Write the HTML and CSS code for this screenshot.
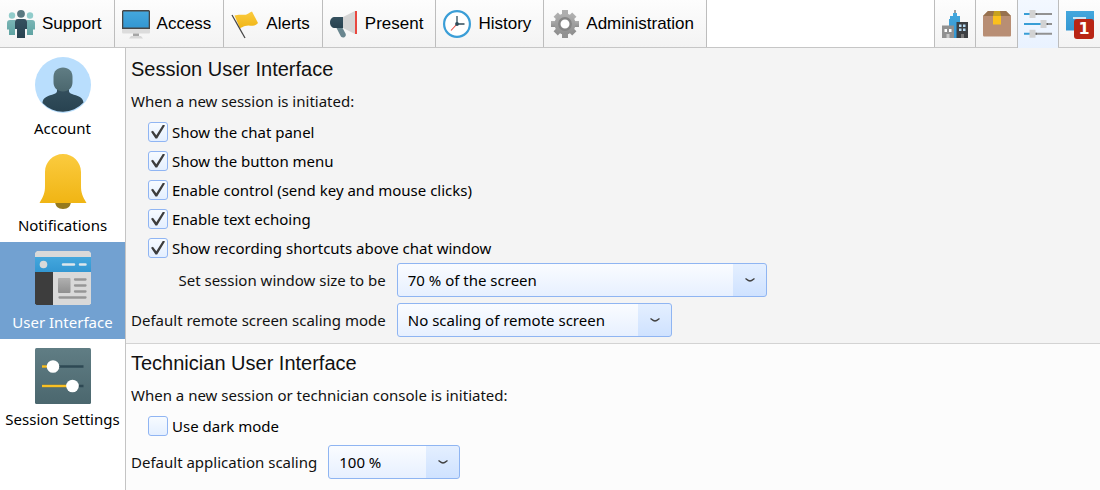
FILE: index.html
```html
<!DOCTYPE html>
<html lang="en">
<head>
<meta charset="utf-8">
<meta name="viewport" content="width=device-width, initial-scale=1">
<title>User Interface Settings</title>
<link rel="stylesheet" href="styles.css">
</head>
<body>
<svg class="defs" aria-hidden="true">
  <defs>
    <linearGradient id="teal" x1="0" y1="0" x2="0" y2="1"><stop offset="0" stop-color="#7ab5b5"/><stop offset="1" stop-color="#5fa3a2"/></linearGradient>
    <linearGradient id="slate" x1="0" y1="0" x2="0" y2="1"><stop offset="0" stop-color="#607d84"/><stop offset="1" stop-color="#4b676e"/></linearGradient>
    <linearGradient id="navy" x1="0" y1="0" x2="0" y2="1"><stop offset="0" stop-color="#35515f"/><stop offset="1" stop-color="#284250"/></linearGradient>
    <linearGradient id="blue" x1="0" y1="0" x2="0" y2="1"><stop offset="0" stop-color="#44a7dd"/><stop offset="1" stop-color="#3397d2"/></linearGradient>
    <linearGradient id="gold" x1="0" y1="0" x2="0" y2="1"><stop offset="0" stop-color="#fbcb3f"/><stop offset="1" stop-color="#f0b514"/></linearGradient>
    <linearGradient id="gray" x1="0" y1="0" x2="0" y2="1"><stop offset="0" stop-color="#b0b0b0"/><stop offset="1" stop-color="#8f8f8f"/></linearGradient>
  </defs>
</svg>

<header class="topbar">
  <nav class="tabs" aria-label="Main">
    <button class="tab" type="button">
      <svg class="tab-icon" viewBox="0 0 28 28" aria-hidden="true">
        <circle cx="5" cy="5.500" r="3.200" fill="#91cccb"/><circle cx="23" cy="5.500" r="3.200" fill="#91cccb"/>
        <path d="M3 10h5v15H2v-5.500H0V13c0-2 1-3 3-3zM25 10h-5v15h6v-5.500h2V13c0-2-1-3-3-3z" fill="url(#teal)"/>
        <circle cx="14" cy="3.800" r="3.900" fill="#5a7880"/>
        <path d="M11 9h6c2 0 3 1 3 3v7h-2v9h-8v-9H8v-7c0-2 1-3 3-3z" fill="url(#navy)"/>
      </svg>Support
    </button>
    <button class="tab" type="button">
      <svg class="tab-icon" viewBox="0 0 28 28" aria-hidden="true">
        <path d="M0 18h28v4c0 1-.5 1.500-1.500 1.500h-25C.5 23.500 0 23 0 22z" fill="#dcdcdc"/>
        <path d="M11 23.500h6v3h-6z" fill="#a6a6a6"/><path d="M9 26h10l2 2.500H7z" fill="#d8d8d8"/>
        <path d="M1 0h26l1 1v18H0V1z" fill="#464646"/><path d="M1.300 1.500h25.400v16H1.300z" fill="url(#blue)"/>
      </svg>Access
    </button>
    <button class="tab" type="button">
      <svg class="tab-icon" viewBox="0 0 28 28" aria-hidden="true">
        <path d="M3.500 5.500c6-2 10 .5 13-1.500 2-1 3-2 4.500-2.500L27 13c-4 5-8 1-13 3-2 .7-4 1.500-5 2.500z" fill="url(#gold)"/>
        <path d="M1 5l13 23" stroke="#454545" stroke-width="1.300"/>
      </svg>Alerts
    </button>
    <button class="tab" type="button">
      <svg class="tab-icon" viewBox="0 0 28 28" aria-hidden="true">
        <path d="M6 17h6l3.500 6.500c1 2-.5 4-2.500 4-1.200 0-2-.8-2.500-1.700z" fill="#69868f"/>
        <path d="M14 7H5C2 7 0 9 0 12.500S2 18 5 18h9z" fill="url(#navy)"/>
        <path d="M13 7l12-6v23l-12-6z" fill="#d5d5d5"/><path d="M25 1h2v23h-2z" fill="#e9473f"/>
      </svg>Present
    </button>
    <button class="tab" type="button">
      <svg class="tab-icon" viewBox="0 0 28 28" aria-hidden="true">
        <circle cx="14" cy="14" r="12.900" fill="#fff" stroke="#3b9ed7" stroke-width="2.200"/>
        <path d="M14 14l-6 6.500" stroke="#e9473f" stroke-width="1.100"/>
        <path d="M14 6v8h7.500" fill="none" stroke="#2f4b59" stroke-width="1.300"/><circle cx="14" cy="14" r="1.900" fill="#2f4b59"/>
      </svg>History
    </button>
    <button class="tab" type="button">
      <svg class="tab-icon" viewBox="0 0 28 28" aria-hidden="true">
        <g fill="url(#gray)">
          <path d="M11 0h6v28h-6z"/><path d="M0 11h28v6H0z"/>
          <path d="M11 .8h6v26.400h-6z" transform="rotate(45 14 14)"/><path d="M11 .8h6v26.400h-6z" transform="rotate(-45 14 14)"/>
          <circle cx="14" cy="14" r="10.500"/>
        </g>
        <circle cx="14" cy="14" r="5.700" fill="#fff" stroke="#858585" stroke-width="2.400"/>
      </svg>Administration
    </button>
  </nav>

  <div class="tools">
    <button class="tool" type="button" aria-label="Company">
      <svg class="tab-icon" viewBox="0 0 28 28" aria-hidden="true">
        <path d="M13.500 0h1v4h-1z" fill="#454545"/>
        <path d="M12 3h4v3h3v10H9V6h3zM8 9h11v19H8z" fill="url(#blue)"/>
        <path d="M1 15.500h12V28H1z" fill="#919191"/><path d="M3.500 19H6v3H3.500zM8 19h2.500v3H8z" fill="#fff"/><path d="M5.500 24h3v4h-3z" fill="#c9c9c9"/>
        <path d="M15.500 12H27v16H15.500z" fill="#3c3f42"/><path d="M18 14.500h2.500V17H18zM22 14.500h2.500V17H22zM18 18.500h2.500V21H18zM22 18.500h2.500V21H22z" fill="#b9def5"/><path d="M20 24h3v4h-3z" fill="#777"/>
      </svg>
    </button>
    <button class="tool" type="button" aria-label="Packages">
      <svg class="tab-icon" viewBox="0 0 28 28" aria-hidden="true">
        <path d="M5 1h18l5 5v19c0 1-.5 1.500-1.500 1.500h-25C.5 26.500 0 26 0 25V6z" fill="#b88e74"/>
        <path d="M5 1h18l5 5H0z" fill="#97714f"/><path d="M11 1h6l1 5h-8z" fill="#c7a11f"/><path d="M10 6h8v8.500h-8z" fill="#fac01d"/>
      </svg>
    </button>
    <button class="tool tool-active" type="button" aria-label="Settings">
      <svg class="tab-icon" viewBox="0 0 28 28" aria-hidden="true">
        <path d="M0 3h8v2H0zM0 13h19v2H0zM0 22.700h8v2H0z" fill="#399ed6"/>
        <path d="M8 3h20v2H8zM19 13h9v2h-9zM8 22.700h20v2H8z" fill="#929292"/>
        <path d="M11.500 3h1.300v2h-1.300zM22.500 13h1.300v2h-1.300zM11.500 22.700h1.300v2h-1.300z" fill="#5d5d5d"/>
        <path d="M5.500 0h6v8h-6zM16.500 10h6v8h-6zM5.500 19.700h6v8h-6z" fill="#d2d2d2"/>
      </svg>
    </button>
    <button class="tool" type="button" aria-label="Messages, 1 new">
      <svg class="tab-icon" viewBox="0 0 28 28" aria-hidden="true">
        <path d="M0 1h28v19.500H9l-3 0H0z" fill="url(#blue)"/><path d="M7 8h13M9 12.500h11" stroke="#fff" stroke-width="1.500"/>
      </svg>
      <span class="badge">1</span>
    </button>
  </div>
</header>

<div class="body">
  <nav class="sidebar" aria-label="Settings">
    <button class="side-item" type="button">
      <svg class="side-icon" viewBox="0 0 56 56" aria-hidden="true">
        <circle cx="28" cy="28" r="28" fill="#b9defd"/>
        <path d="M22 30h12v4c0 1.500 1 2.300 3 3 5 1.800 11 3 11.500 8.500A28 28 0 0 1 7.500 46C7.500 40 14 38.800 19 37c2-.7 3-1.500 3-3z" fill="url(#navy)"/>
        <path d="M18.500 20c0-6 4-9.500 9.500-9.500s9.500 3.500 9.500 9.500v5c0 6-4 9.500-9.500 9.500s-9.500-3.500-9.500-9.500z" fill="url(#slate)"/>
      </svg>Account
    </button>
    <button class="side-item" type="button">
      <svg class="side-icon" viewBox="0 0 56 56" aria-hidden="true">
        <path d="M20 47h16c0 5-3 8-8 8s-8-3-8-8z" fill="#957a1e"/>
        <path d="M10 18C10 8 18 0 28 0s18 8 18 18v14c0 7 1.500 10 5.500 17h-47C8.500 42 10 39 10 32z" fill="url(#gold)"/>
      </svg>Notifications
    </button>
    <button class="side-item side-active" type="button" aria-current="page">
      <svg class="side-icon" viewBox="0 0 56 56" aria-hidden="true">
        <path d="M2 0h52l2 2v5H0V2z" fill="#d9d9d9"/><path d="M0 6h56v15H0z" fill="url(#blue)"/>
        <path d="M0 21h18v33H1.500L0 52.500z" fill="#3d3d3d"/><path d="M18 21h38v31.500L54.500 54H18z" fill="#d9d9d9"/>
        <circle cx="8.500" cy="13.500" r="3.800" fill="#d9d9d9"/>
        <path d="M28 13.500h11M45 13.500h5.500" stroke="#dce6eb" stroke-width="2.500" stroke-linecap="round"/>
        <rect x="23" y="27" width="12.500" height="15" rx="1" fill="url(#gray)"/>
        <path d="M40 28.500h10.500M40 34.500h10.500M40 40.500h10.500M24.500 46.500h26" stroke="#969696" stroke-width="2.300" stroke-linecap="round"/>
      </svg>User Interface
    </button>
    <button class="side-item" type="button">
      <svg class="side-icon" viewBox="0 0 56 56" aria-hidden="true">
        <rect width="56" height="56" rx="1.500" fill="url(#slate)"/>
        <path d="M7 18.500h41.500M7 38h41.500" stroke="#2e4954" stroke-width="2.500"/>
        <path d="M7 18.500h11M7 38h31" stroke="#fac023" stroke-width="2.500"/>
        <circle cx="18" cy="18.500" r="6.300" fill="#fff"/><circle cx="37.500" cy="38" r="6.300" fill="#fff"/>
      </svg>Session Settings
    </button>
  </nav>

  <main class="content">
    <section class="panel">
      <h2 class="title">Session User Interface</h2>
      <p class="lead">When a new session is initiated:</p>
      <div class="checks">
        <label class="check"><input class="box" type="checkbox" checked>Show the chat panel</label>
        <label class="check"><input class="box" type="checkbox" checked>Show the button menu</label>
        <label class="check"><input class="box" type="checkbox" checked>Enable control (send key and mouse clicks)</label>
        <label class="check"><input class="box" type="checkbox" checked>Enable text echoing</label>
        <label class="check"><input class="box" type="checkbox" checked>Show recording shortcuts above chat window</label>
      </div>
      <div class="fields">
        <label for="window-size">Set session window size to be</label>
        <span class="combo combo-wide">
          <select class="select" id="window-size"><option>70 % of the screen</option></select>
          <svg class="arrow" viewBox="0 0 10 6" aria-hidden="true"><path d="M.5 1.500L3.500 3.500Q5 4.300 6.500 3.500L9.500 1.500"/></svg>
        </span>
        <label for="scaling-mode">Default remote screen scaling mode</label>
        <span class="combo combo-medium">
          <select class="select" id="scaling-mode"><option>No scaling of remote screen</option></select>
          <svg class="arrow" viewBox="0 0 10 6" aria-hidden="true"><path d="M.5 1.500L3.500 3.500Q5 4.300 6.500 3.500L9.500 1.500"/></svg>
        </span>
      </div>
    </section>

    <section class="panel panel-light">
      <h2 class="title">Technician User Interface</h2>
      <p class="lead">When a new session or technician console is initiated:</p>
      <div class="checks">
        <label class="check"><input class="box" type="checkbox">Use dark mode</label>
      </div>
      <div class="fields fields-app">
        <label for="app-scaling">Default application scaling</label>
        <span class="combo combo-small">
          <select class="select" id="app-scaling"><option>100 %</option></select>
          <svg class="arrow" viewBox="0 0 10 6" aria-hidden="true"><path d="M.5 1.500L3.500 3.500Q5 4.300 6.500 3.500L9.500 1.500"/></svg>
        </span>
      </div>
    </section>
  </main>
</div>
</body>
</html>
```
FILE: styles.css
```css
* { box-sizing: border-box; }

body {
  display: flex;
  flex-direction: column;
  min-height: 100vh;
  margin: 0;
  background: #fff;
  color: #111;
  font: 15px/20px "Noto Sans", "Open Sans", sans-serif;
}

button { margin: 0; border: 0; color: #000; font: inherit; }

.defs { position: absolute; width: 0; height: 0; }

/* Top bar */
.topbar {
  display: flex;
  justify-content: space-between;
  height: 48px;
  border-bottom: 1px solid #c6c6c6;
}
.tabs, .tools { display: flex; }
.tab {
  display: flex;
  align-items: center;
  gap: 7px;
  padding: 0 12px 0 7px;
  border-right: 1px solid #bdbdbd;
  background: linear-gradient(#fdfdfd, #f3f3f3);
  font: 17px/24px "Liberation Sans", Arial, sans-serif;
  white-space: nowrap;
}
.tab-icon { display: block; flex: none; width: 28px; height: 28px; overflow: visible; }
.tool {
  position: relative;
  display: grid;
  place-items: center;
  width: 41px;
  padding: 0;
  border-left: 1px solid #bdbdbd;
  background: linear-gradient(#fdfdfd, #f3f3f3);
}
.tool:nth-child(even) { width: 42px; }
.tool-active { margin-bottom: -1px; background: linear-gradient(#f3f8ff, #e9f2ff); }
.badge {
  position: absolute;
  right: 6px;
  bottom: 8px;
  width: 20px;
  border-radius: 3px;
  background: #b92515;
  color: #fff;
  font: bold 16px/20px "DejaVu Sans", sans-serif;
}

/* Sidebar */
.body { display: flex; flex: 1; }
.sidebar {
  display: flex;
  flex-direction: column;
  flex: none;
  width: 126px;
  border-right: 1px solid #c4c4c4;
  background: #fff;
}
.side-item {
  display: flex;
  flex-direction: column;
  align-items: center;
  gap: 5px;
  padding: 9px 0 7px;
  background: transparent;
  white-space: nowrap;
}
.side-icon { display: block; width: 56px; height: 56px; }
.side-active { background: #72a1d1; color: #fff; }

/* Settings */
.content { display: flex; flex-direction: column; flex: 1; min-width: 0; }
.panel { padding: 9px 5px 6px; background: #f4f4f4; }
.panel-light { flex: 1; border-top: 1px solid #d3d3d3; background: #fcfcfc; padding-top: 7px; }
.title {
  margin: 0 0 10px;
  font: 20px/24px "Liberation Sans", Arial, sans-serif;
}
.lead { margin: 0 0 6px; }
.checks { display: grid; justify-items: start; padding-left: 17px; }
.check {
  display: flex;
  align-items: center;
  gap: 4px;
  height: 29px;
  color: #000;
}
.box {
  appearance: none;
  display: grid;
  place-items: center;
  width: 20px;
  height: 20px;
  margin: 0;
  border: 1px solid #90b5f3;
  border-radius: 3px;
  background: linear-gradient(#f7fbff, #e4efff);
}
.box:checked::before {
  content: "";
  width: 14px;
  height: 14px;
  background: #3d3d3d;
  clip-path: polygon(0 52%, 14% 44%, 38% 76%, 86% 0, 100% 8%, 44% 100%, 32% 100%);
}

.fields {
  display: grid;
  grid-template-columns: auto 1fr;
  gap: 6px 11px;
  align-items: center;
  justify-items: end;
  margin-top: 1px;
}
.fields-app { margin-top: 5px; }
.combo { position: relative; display: block; justify-self: start; max-width: 100%; }
.combo-wide { width: 370px; }
.combo-medium { width: 275px; }
.combo-small { width: 132px; }
.select {
  appearance: none;
  display: block;
  width: 100%;
  height: 34px;
  margin: 0;
  padding: 0 36px 0 10px;
  border: 1px solid #8fb5f2;
  border-radius: 3px;
  background:
    linear-gradient(#e4efff, #cfe2ff) right / 33px 100% no-repeat,
    linear-gradient(#fafcff, #e7f0ff);
  color: #000;
  font: inherit;
}
.arrow {
  position: absolute;
  top: 14px;
  right: 12px;
  width: 10px;
  height: 6px;
  fill: none;
  stroke: #404040;
  stroke-width: 1.5;
  pointer-events: none;
}
```
